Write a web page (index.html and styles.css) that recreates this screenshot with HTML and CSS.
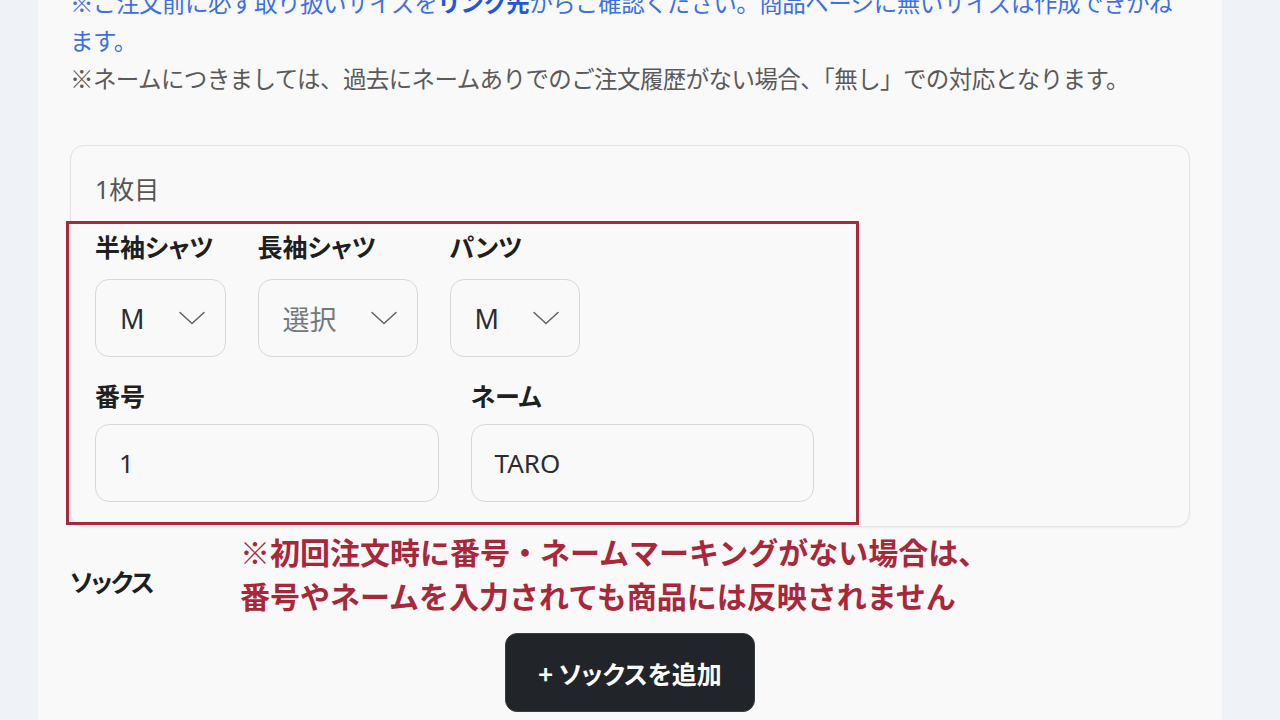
FILE: index.html
```html
<!DOCTYPE html>
<html lang="ja">
<head>
<meta charset="utf-8">
<title>サイズ選択</title>
<link rel="stylesheet" href="styles.css">
</head>
<body>
<main class="panel">
  <div class="notice">
    <p class="notice-blue">※ご注文前に必ず取り扱いサイズを<a class="notice-link" href="#">リンク先</a>からご確認ください。商品ページに無いサイズは作成できかねます。</p>
    <p class="notice-gray">※ネームにつきましては、過去にネームありでのご注文履歴がない場合、「無し」での対応となります。</p>
  </div>

  <div class="form-area">
    <section class="card">
      <div class="card-title">1枚目</div>
      <div class="size-row">
        <div class="field">
          <div class="label">半袖シャツ</div>
          <div class="select"><span class="select-value">M</span><svg class="chev" viewBox="0 0 26 14" width="26" height="14"><path d="M1 1.5 L13 12.5 L25 1.5" fill="none" stroke="currentColor" stroke-width="1.4" stroke-linecap="round" stroke-linejoin="round"/></svg></div>
        </div>
        <div class="field">
          <div class="label">長袖シャツ</div>
          <div class="select"><span class="select-value placeholder">選択</span><svg class="chev" viewBox="0 0 26 14" width="26" height="14"><path d="M1 1.5 L13 12.5 L25 1.5" fill="none" stroke="currentColor" stroke-width="1.4" stroke-linecap="round" stroke-linejoin="round"/></svg></div>
        </div>
        <div class="field">
          <div class="label">パンツ</div>
          <div class="select"><span class="select-value">M</span><svg class="chev" viewBox="0 0 26 14" width="26" height="14"><path d="M1 1.5 L13 12.5 L25 1.5" fill="none" stroke="currentColor" stroke-width="1.4" stroke-linecap="round" stroke-linejoin="round"/></svg></div>
        </div>
      </div>
      <div class="text-row">
        <div class="field">
          <div class="label label-tight">番号</div>
          <div class="input">1</div>
        </div>
        <div class="field">
          <div class="label label-tight">ネーム</div>
          <div class="input">TARO</div>
        </div>
      </div>
    </section>

    <div class="socks">
      <div class="socks-label">ソックス</div>
      <button class="add-btn" type="button">+ ソックスを追加</button>
    </div>

    <div class="highlight-box"></div>
    <p class="red-note">※初回注文時に番号・ネームマーキングがない場合は、<br>番号やネームを入力されても商品には反映されません</p>
  </div>
</main>
</body>
</html>
```

FILE: styles.css
```css
* { box-sizing: border-box; }

html, body {
  margin: 0;
  height: 100%;
  overflow: hidden;
}

body {
  background: #eff3f8;
  font-family: "Noto Sans", "Noto Sans CJK JP", sans-serif;
  color: #212529;
}

.panel {
  width: 1184px;
  min-height: calc(100vh + 40px);
  margin: 0 0 0 38px;
  padding: 0 32px;
  background: #f9f9fa;
}

.notice {
  margin-top: -17px;
  font-family: "Noto Sans CJK JP", sans-serif;
  font-size: 23.5px;
  line-height: 38px;
}

.notice p { margin: 0; }

.notice-blue {
  color: #3d70e6;
  letter-spacing: -0.5px;
}

.notice-link {
  color: #2456d8;
  font-weight: 700;
  text-decoration: none;
}

.notice-gray {
  color: #5a5a5a;
  letter-spacing: -0.6px;
}

.form-area {
  position: relative;
  margin-top: 48px;
}

.card {
  border: 1px solid #e1e3e6;
  border-radius: 14px;
  padding: 24px;
  background: #f9f9fa;
  box-shadow: 0 1px 2px rgba(0, 0, 0, 0.05);
}

.card-title {
  font-family: "Noto Sans", "Noto Sans CJK JP", sans-serif;
  font-size: 25px;
  line-height: 38px;
  color: #555;
}

.size-row {
  display: flex;
  gap: 32px;
  margin-top: 22px;
}

.field {
  display: flex;
  flex-direction: column;
  align-items: stretch;
}

.label {
  font-family: "Noto Sans CJK JP", sans-serif;
  font-feature-settings: "palt";
  font-weight: 700;
  font-size: 25px;
  line-height: 32px;
  color: #1d1f21;
  margin-bottom: 17px;
  white-space: nowrap;
}

.label-tight { margin-bottom: 13px; }

.select {
  display: inline-flex;
  align-items: center;
  gap: 34px;
  height: 78px;
  padding: 0 20px 0 24px;
  border: 1px solid #d6d8db;
  border-radius: 14px;
  background: #f9f9fa;
  color: #5a5d60;
}

.select-value {
  font-family: "Noto Sans", "Noto Sans CJK JP", sans-serif;
  font-size: 27px;
  color: #2b2e31;
}

.select-value.placeholder { color: #75787b; }

.chev { flex: none; display: block; }

.text-row {
  display: grid;
  grid-template-columns: 1fr 1fr;
  gap: 32px;
  width: 719px;
  margin-top: 22px;
}

.input {
  display: flex;
  align-items: center;
  height: 78px;
  padding: 0 23px;
  border: 1px solid #d6d8db;
  border-radius: 14px;
  background: #f9f9fa;
  font-family: "Noto Sans", sans-serif;
  font-size: 26px;
  color: #2b2e31;
}

.socks {
  display: flex;
  flex-direction: column;
  align-items: center;
  margin-top: 35px;
}

.socks-label {
  align-self: flex-start;
  font-family: "Noto Sans CJK JP", sans-serif;
  font-feature-settings: "palt";
  font-weight: 700;
  font-size: 25px;
  line-height: 38px;
  color: #1d1f21;
  letter-spacing: -1.5px;
}

.add-btn {
  margin-top: 33px;
  height: 79px;
  padding: 0 32px;
  border: 1px solid #3a3d40;
  border-radius: 12px;
  background: #212529;
  color: #fff;
  font-family: "Noto Sans CJK JP", sans-serif;
  font-feature-settings: "palt";
  font-weight: 700;
  font-size: 25px;
}

.highlight-box {
  position: absolute;
  left: -4px;
  top: 76px;
  width: 793px;
  height: 304px;
  border: 3px solid #a8293b;
  pointer-events: none;
}

.red-note {
  position: absolute;
  left: 170px;
  top: 384px;
  margin: 0;
  font-family: "Noto Sans CJK JP", sans-serif;
  font-weight: 700;
  font-size: 30px;
  line-height: 44px;
  color: #a8283a;
  white-space: nowrap;
}
```
